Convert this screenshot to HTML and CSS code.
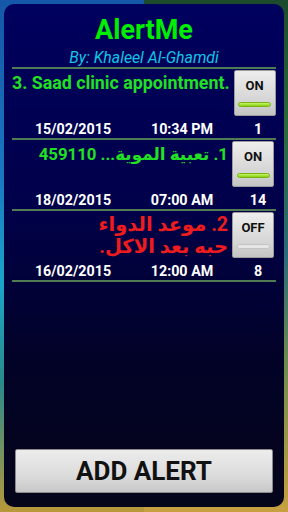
FILE: index.html
```html
<!DOCTYPE html>
<html>
<head>
<meta charset="utf-8">
<meta name="viewport" content="width=device-width, initial-scale=1">
<title>AlertMe</title>
<link rel="stylesheet" href="styles.css">
</head>
<body>
<div class="screen">
    <div class="panel">
        <div class="header">
            <h1 class="app-title">AlertMe</h1>
            <p class="app-author">By: Khaleel Al-Ghamdi</p>
        </div>

        <div class="alert-list">
            <div class="alert-row">
                <div class="alert-top">
                    <p class="alert-text text-green">3. Saad clinic appointment.</p>
                    <div class="toggle is-on">
                        <span class="toggle-label">ON</span>
                        <span class="toggle-light"></span>
                    </div>
                </div>
                <div class="alert-meta">
                    <span class="meta-date">15/02/2015</span>
                    <span class="meta-time">10:34 PM</span>
                    <span class="meta-count">1</span>
                </div>
            </div>

            <div class="alert-row">
                <div class="alert-top">
                    <p class="alert-text text-green rtl" dir="rtl">1. تعبية الموية... 459110</p>
                    <div class="toggle is-on">
                        <span class="toggle-label">ON</span>
                        <span class="toggle-light"></span>
                    </div>
                </div>
                <div class="alert-meta">
                    <span class="meta-date">18/02/2015</span>
                    <span class="meta-time">07:00 AM</span>
                    <span class="meta-count">14</span>
                </div>
            </div>

            <div class="alert-row">
                <div class="alert-top">
                    <p class="alert-text text-red rtl rtl-large" dir="rtl">2. موعد الدواء<br>حبه بعد الاكل.</p>
                    <div class="toggle">
                        <span class="toggle-label">OFF</span>
                        <span class="toggle-light"></span>
                    </div>
                </div>
                <div class="alert-meta">
                    <span class="meta-date">16/02/2015</span>
                    <span class="meta-time">12:00 AM</span>
                    <span class="meta-count">8</span>
                </div>
            </div>
        </div>

        <div class="spacer"></div>

        <div class="add-button">ADD ALERT</div>
    </div>
</div>
</body>
</html>
```

FILE: styles.css
```css
/* Reset */
* { margin: 0; padding: 0; box-sizing: border-box; }

body {
    width: 288px;
    height: 512px;
    overflow: hidden;
    font-family: Roboto, "DejaVu Sans", sans-serif;
    background:
        linear-gradient(to bottom, #1557a8 0%, #1a78c0 35%, #1aa6c8 55%, #2a8a8a 75%, #b8983a 100%) left top / 50% 100% no-repeat,
        linear-gradient(to bottom, #1c4a2c 0%, #2a6a3a 25%, #2a6a7a 50%, #6a8a50 70%, #c8a040 100%) right top / 50% 100% no-repeat;
}

.screen {
    width: 288px;
    height: 512px;
    padding: 4px;
}

/* Main panel */
.panel {
    height: 503px;
    border-radius: 10px;
    background: linear-gradient(to bottom, #00005e 0%, #00004a 40%, #020228 70%, #05051a 100%);
    padding: 12px 8px 14px;
    display: flex;
    flex-direction: column;
}

.header {
    text-align: center;
}

.app-title {
    font-size: 27px;
    line-height: 28px;
    font-weight: bold;
    color: #00ee00;
    margin-bottom: 6px;
}

.app-author {
    font-size: 15.8px;
    line-height: 16px;
    font-style: italic;
    color: #12c6e4;
    margin-bottom: 1px;
}

/* Alert rows */
.alert-list {
    border-top: 2px solid #4f7b55;
}

.alert-row {
    padding-top: 1px;
    border-bottom: 2px solid #4f7b55;
}

.alert-top {
    display: flex;
    align-items: flex-start;
    gap: 4px;
}

.alert-text {
    flex: 1;
    font-size: 17.8px;
    line-height: 22px;
    font-weight: bold;
    padding-top: 2px;
    white-space: nowrap;
}

.alert-text.rtl {
    font-size: 16.8px;
}

.alert-text.rtl-large {
    font-size: 19.5px;
}

.text-green { color: #22e022; }
.text-red { color: #ee1c1c; }

.toggle {
    flex-shrink: 0;
    width: 42px;
    height: 46px;
    margin-right: 2px;
    background: linear-gradient(to bottom, #ededed, #d4d4d4 70%, #c4c4c4);
    border: 1px solid #9c9c9c;
    border-radius: 2px;
    display: flex;
    flex-direction: column;
    align-items: center;
    padding-top: 8px;
    gap: 9px;
}

.toggle-label {
    font-size: 13px;
    line-height: 14px;
    font-weight: bold;
    color: #111;
}

.toggle-light {
    width: 33px;
    height: 5px;
    border-radius: 3px;
    background: #e6e6e6;
    border: 1px solid #c4c4c4;
}

.is-on .toggle-light {
    background: linear-gradient(to bottom, #c4f56a, #8ad010);
    border-color: #7ab414;
}

.alert-meta {
    display: grid;
    grid-template-columns: 122px 96px 1fr;
    margin-top: 5px;
    padding-bottom: 1px;
    font-size: 14.3px;
    line-height: 16px;
    font-weight: bold;
    color: #ffffff;
    text-align: center;
}

.meta-count {
    padding-left: 10px;
}

.spacer {
    flex: 1;
}

/* Bottom button */
.add-button {
    margin: 0 3px;
    height: 44px;
    background: linear-gradient(to bottom, #ececec, #dcdcdc 60%, #c8c8c8);
    border: 1px solid #8a8a8a;
    border-radius: 2px;
    font-size: 26px;
    line-height: 42px;
    font-weight: bold;
    color: #111;
    text-align: center;
}
```
